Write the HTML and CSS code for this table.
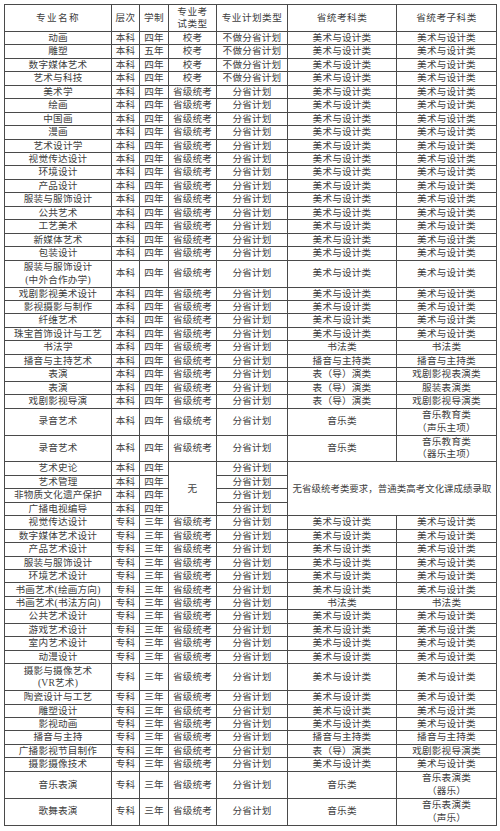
FILE: index.html
```html
<!DOCTYPE html>
<html lang="zh-CN">
<head>
<meta charset="utf-8">
<title>专业招生计划表</title>
<link rel="stylesheet" href="styles.css">
</head>
<body>
<table class="t">
<colgroup>
<col class="c1"><col class="c2"><col class="c3"><col class="c4"><col class="c5"><col class="c6"><col class="c7">
</colgroup>
<thead>
<tr class="d"><th class="wide">专业名称</th><th>层次</th><th>学制</th><th>专业考<br>试类型</th><th>专业计划类型</th><th>省统考科类</th><th>省统考子科类</th></tr>
</thead>
<tbody>
<tr><td>动画</td><td>本科</td><td>四年</td><td>校考</td><td>不做分省计划</td><td>美术与设计类</td><td>美术与设计类</td></tr>
<tr><td>雕塑</td><td>本科</td><td>五年</td><td>校考</td><td>不做分省计划</td><td>美术与设计类</td><td>美术与设计类</td></tr>
<tr><td>数字媒体艺术</td><td>本科</td><td>四年</td><td>校考</td><td>不做分省计划</td><td>美术与设计类</td><td>美术与设计类</td></tr>
<tr><td>艺术与科技</td><td>本科</td><td>四年</td><td>校考</td><td>不做分省计划</td><td>美术与设计类</td><td>美术与设计类</td></tr>
<tr><td>美术学</td><td>本科</td><td>四年</td><td>省级统考</td><td>分省计划</td><td>美术与设计类</td><td>美术与设计类</td></tr>
<tr><td>绘画</td><td>本科</td><td>四年</td><td>省级统考</td><td>分省计划</td><td>美术与设计类</td><td>美术与设计类</td></tr>
<tr><td>中国画</td><td>本科</td><td>四年</td><td>省级统考</td><td>分省计划</td><td>美术与设计类</td><td>美术与设计类</td></tr>
<tr><td>漫画</td><td>本科</td><td>四年</td><td>省级统考</td><td>分省计划</td><td>美术与设计类</td><td>美术与设计类</td></tr>
<tr><td>艺术设计学</td><td>本科</td><td>四年</td><td>省级统考</td><td>分省计划</td><td>美术与设计类</td><td>美术与设计类</td></tr>
<tr><td>视觉传达设计</td><td>本科</td><td>四年</td><td>省级统考</td><td>分省计划</td><td>美术与设计类</td><td>美术与设计类</td></tr>
<tr><td>环境设计</td><td>本科</td><td>四年</td><td>省级统考</td><td>分省计划</td><td>美术与设计类</td><td>美术与设计类</td></tr>
<tr><td>产品设计</td><td>本科</td><td>四年</td><td>省级统考</td><td>分省计划</td><td>美术与设计类</td><td>美术与设计类</td></tr>
<tr><td>服装与服饰设计</td><td>本科</td><td>四年</td><td>省级统考</td><td>分省计划</td><td>美术与设计类</td><td>美术与设计类</td></tr>
<tr><td>公共艺术</td><td>本科</td><td>四年</td><td>省级统考</td><td>分省计划</td><td>美术与设计类</td><td>美术与设计类</td></tr>
<tr><td>工艺美术</td><td>本科</td><td>四年</td><td>省级统考</td><td>分省计划</td><td>美术与设计类</td><td>美术与设计类</td></tr>
<tr><td>新媒体艺术</td><td>本科</td><td>四年</td><td>省级统考</td><td>分省计划</td><td>美术与设计类</td><td>美术与设计类</td></tr>
<tr><td>包装设计</td><td>本科</td><td>四年</td><td>省级统考</td><td>分省计划</td><td>美术与设计类</td><td>美术与设计类</td></tr>
<tr class="d"><td>服装与服饰设计<br>(中外合作办学)</td><td>本科</td><td>四年</td><td>省级统考</td><td>分省计划</td><td>美术与设计类</td><td>美术与设计类</td></tr>
<tr><td>戏剧影视美术设计</td><td>本科</td><td>四年</td><td>省级统考</td><td>分省计划</td><td>美术与设计类</td><td>美术与设计类</td></tr>
<tr><td>影视摄影与制作</td><td>本科</td><td>四年</td><td>省级统考</td><td>分省计划</td><td>美术与设计类</td><td>美术与设计类</td></tr>
<tr><td>纤维艺术</td><td>本科</td><td>四年</td><td>省级统考</td><td>分省计划</td><td>美术与设计类</td><td>美术与设计类</td></tr>
<tr><td>珠宝首饰设计与工艺</td><td>本科</td><td>四年</td><td>省级统考</td><td>分省计划</td><td>美术与设计类</td><td>美术与设计类</td></tr>
<tr><td>书法学</td><td>本科</td><td>四年</td><td>省级统考</td><td>分省计划</td><td>书法类</td><td>书法类</td></tr>
<tr><td>播音与主持艺术</td><td>本科</td><td>四年</td><td>省级统考</td><td>分省计划</td><td>播音与主持类</td><td>播音与主持类</td></tr>
<tr><td>表演</td><td>本科</td><td>四年</td><td>省级统考</td><td>分省计划</td><td>表（导）演类</td><td>戏剧影视表演类</td></tr>
<tr><td>表演</td><td>本科</td><td>四年</td><td>省级统考</td><td>分省计划</td><td>表（导）演类</td><td>服装表演类</td></tr>
<tr><td>戏剧影视导演</td><td>本科</td><td>四年</td><td>省级统考</td><td>分省计划</td><td>表（导）演类</td><td>戏剧影视导演类</td></tr>
<tr class="d"><td>录音艺术</td><td>本科</td><td>四年</td><td>省级统考</td><td>分省计划</td><td>音乐类</td><td>音乐教育类<br>（声乐主项）</td></tr>
<tr class="d"><td>录音艺术</td><td>本科</td><td>四年</td><td>省级统考</td><td>分省计划</td><td>音乐类</td><td>音乐教育类<br>（器乐主项）</td></tr>
<tr><td>艺术史论</td><td>本科</td><td>四年</td><td rowspan="4" class="none">无</td><td>分省计划</td><td rowspan="4" colspan="2" class="note">无省级统考类要求，普通类高考文化课成绩录取</td></tr>
<tr><td>艺术管理</td><td>本科</td><td>四年</td><td>分省计划</td></tr>
<tr><td>非物质文化遗产保护</td><td>本科</td><td>四年</td><td>分省计划</td></tr>
<tr><td>广播电视编导</td><td>本科</td><td>四年</td><td>分省计划</td></tr>
<tr><td>视觉传达设计</td><td>专科</td><td>三年</td><td>省级统考</td><td>分省计划</td><td>美术与设计类</td><td>美术与设计类</td></tr>
<tr><td>数字媒体艺术设计</td><td>专科</td><td>三年</td><td>省级统考</td><td>分省计划</td><td>美术与设计类</td><td>美术与设计类</td></tr>
<tr><td>产品艺术设计</td><td>专科</td><td>三年</td><td>省级统考</td><td>分省计划</td><td>美术与设计类</td><td>美术与设计类</td></tr>
<tr><td>服装与服饰设计</td><td>专科</td><td>三年</td><td>省级统考</td><td>分省计划</td><td>美术与设计类</td><td>美术与设计类</td></tr>
<tr><td>环境艺术设计</td><td>专科</td><td>三年</td><td>省级统考</td><td>分省计划</td><td>美术与设计类</td><td>美术与设计类</td></tr>
<tr><td>书画艺术(绘画方向)</td><td>专科</td><td>三年</td><td>省级统考</td><td>分省计划</td><td>美术与设计类</td><td>美术与设计类</td></tr>
<tr><td>书画艺术(书法方向)</td><td>专科</td><td>三年</td><td>省级统考</td><td>分省计划</td><td>书法类</td><td>书法类</td></tr>
<tr><td>公共艺术设计</td><td>专科</td><td>三年</td><td>省级统考</td><td>分省计划</td><td>美术与设计类</td><td>美术与设计类</td></tr>
<tr><td>游戏艺术设计</td><td>专科</td><td>三年</td><td>省级统考</td><td>分省计划</td><td>美术与设计类</td><td>美术与设计类</td></tr>
<tr><td>室内艺术设计</td><td>专科</td><td>三年</td><td>省级统考</td><td>分省计划</td><td>美术与设计类</td><td>美术与设计类</td></tr>
<tr><td>动漫设计</td><td>专科</td><td>三年</td><td>省级统考</td><td>分省计划</td><td>美术与设计类</td><td>美术与设计类</td></tr>
<tr class="d"><td>摄影与摄像艺术<br>(VR艺术)</td><td>专科</td><td>三年</td><td>省级统考</td><td>分省计划</td><td>美术与设计类</td><td>美术与设计类</td></tr>
<tr><td>陶瓷设计与工艺</td><td>专科</td><td>三年</td><td>省级统考</td><td>分省计划</td><td>美术与设计类</td><td>美术与设计类</td></tr>
<tr><td>雕塑设计</td><td>专科</td><td>三年</td><td>省级统考</td><td>分省计划</td><td>美术与设计类</td><td>美术与设计类</td></tr>
<tr><td>影视动画</td><td>专科</td><td>三年</td><td>省级统考</td><td>分省计划</td><td>美术与设计类</td><td>美术与设计类</td></tr>
<tr><td>播音与主持</td><td>专科</td><td>三年</td><td>省级统考</td><td>分省计划</td><td>播音与主持类</td><td>播音与主持类</td></tr>
<tr><td>广播影视节目制作</td><td>专科</td><td>三年</td><td>省级统考</td><td>分省计划</td><td>表（导）演类</td><td>戏剧影视导演类</td></tr>
<tr><td>摄影摄像技术</td><td>专科</td><td>三年</td><td>省级统考</td><td>分省计划</td><td>美术与设计类</td><td>美术与设计类</td></tr>
<tr class="d"><td>音乐表演</td><td>专科</td><td>三年</td><td>省级统考</td><td>分省计划</td><td>音乐类</td><td>音乐表演类<br>（器乐）</td></tr>
<tr class="d"><td>歌舞表演</td><td>专科</td><td>三年</td><td>省级统考</td><td>分省计划</td><td>音乐类</td><td>音乐表演类<br>（声乐）</td></tr>
</tbody>
</table>
</body>
</html>
```
FILE: styles.css
```css
html, body {
  margin: 0;
  padding: 0;
  background: #ffffff;
}

body {
  padding: 4px 0 0 4px;
}

.t {
  border-collapse: collapse;
  table-layout: fixed;
  width: 493px;
  font-family: "Liberation Serif", "Noto Sans CJK SC", serif;
  font-size: 9.6px;
  color: #404040;
}

.c1 { width: 107px; }
.c2 { width: 28px; }
.c3 { width: 29px; }
.c4 { width: 48px; }
.c5 { width: 71px; }
.c6 { width: 109px; }
.c7 { width: 100px; }

.t tr {
  height: 13.46px;
}

.t tr.d {
  height: 26.92px;
}

.t th,
.t td {
  border: 1px solid #4a4a4a;
  padding: 0;
  text-align: center;
  vertical-align: middle;
  font-weight: normal;
  line-height: 12.4px;
  letter-spacing: 0.2px;
  white-space: nowrap;
  overflow: hidden;
}

.t th {
  letter-spacing: 0.5px;
}

.t th.wide {
  letter-spacing: 1.4px;
}

.t td.note {
  font-size: 9.4px;
  letter-spacing: 0.1px;
}
```
